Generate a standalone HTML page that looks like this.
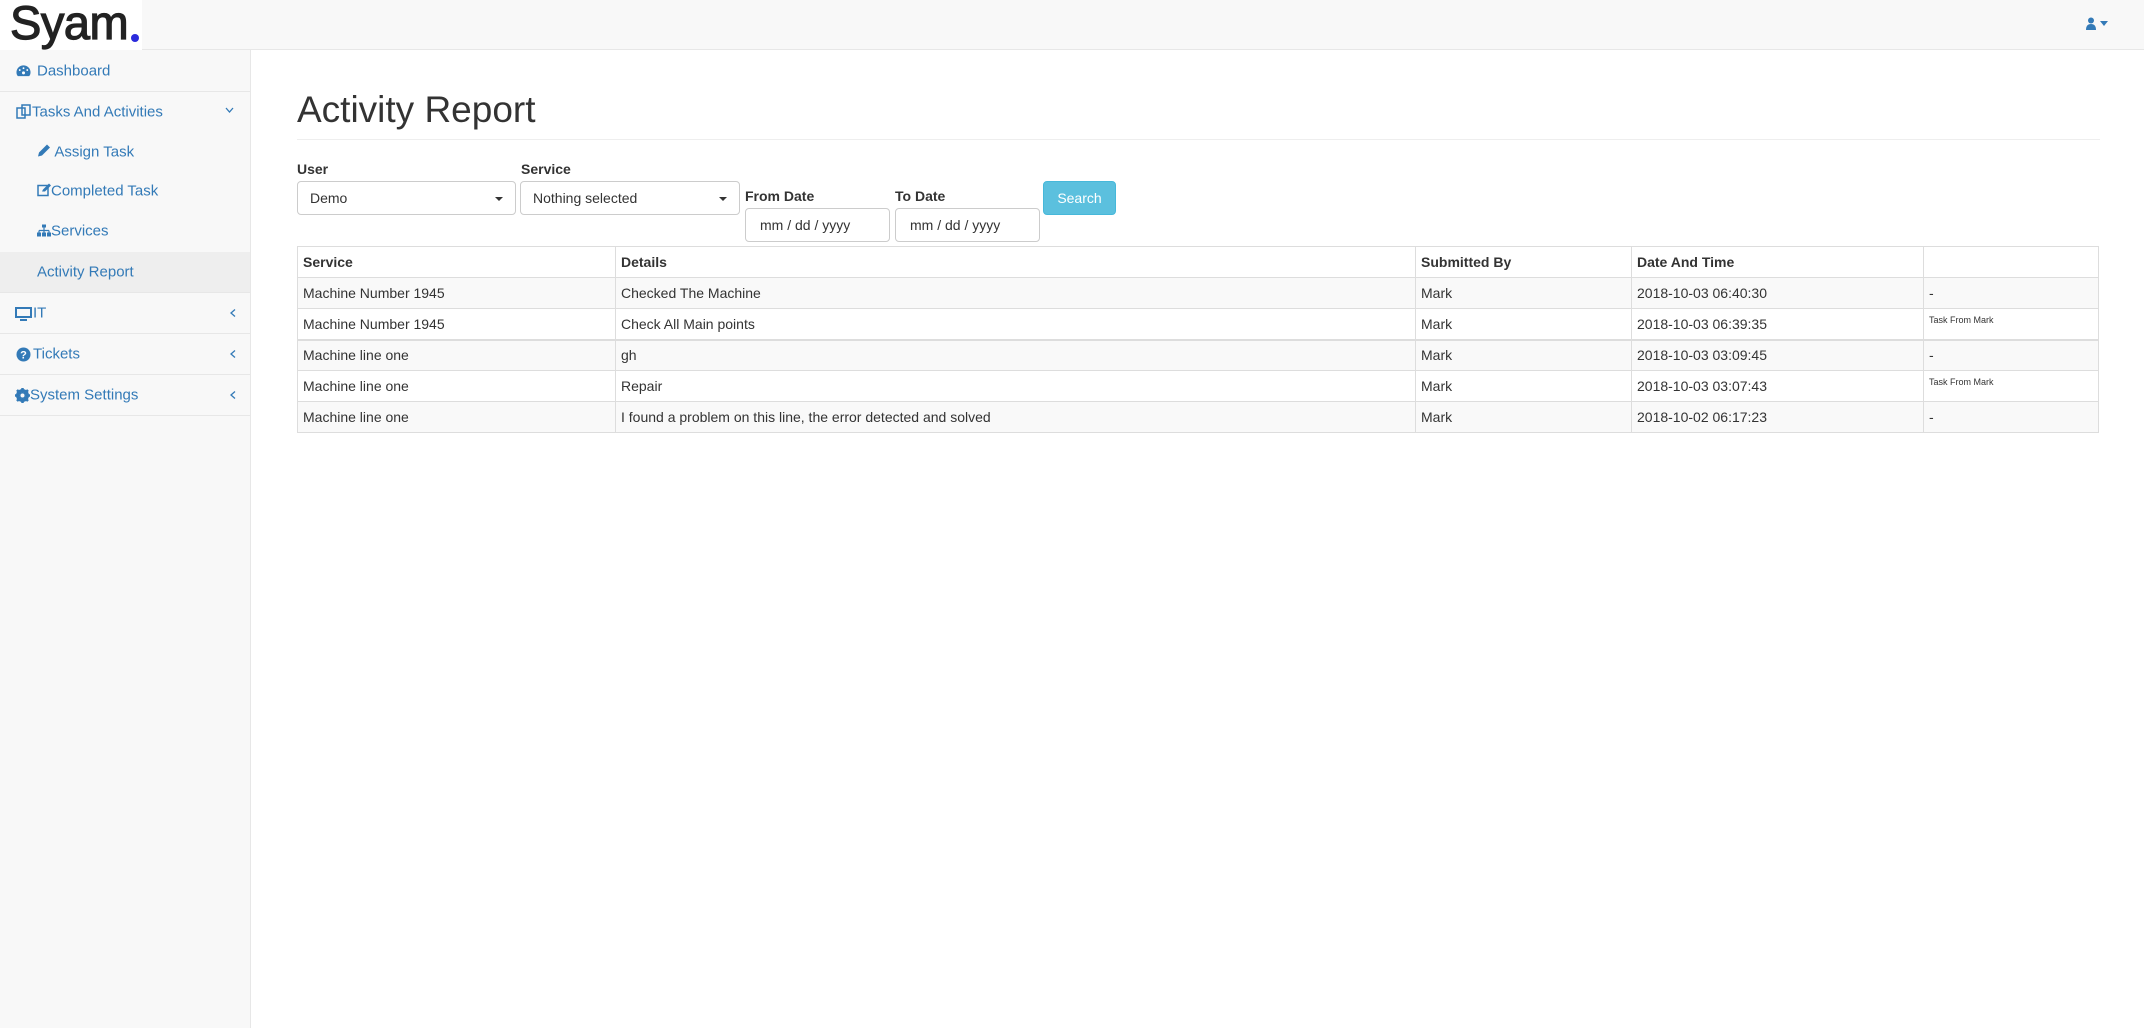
<!DOCTYPE html>
<html><head><meta charset="utf-8">
<style>
*{box-sizing:border-box;margin:0;padding:0}
body{width:2144px;height:1028px;background:#fff;font-family:"Liberation Sans",Arial,sans-serif;color:#333;position:relative;overflow:hidden}
.nav{position:absolute;left:0;top:0;width:2144px;height:50px;background:#f8f8f8;border-bottom:1px solid #e7e7e7}
.logo{position:absolute;left:0;top:0;width:142px;height:50px;background:#fff;font-size:47px;color:#222;line-height:46px;padding-left:10px;letter-spacing:-0.5px;-webkit-text-stroke:1.2px #222}
.dot{position:absolute;left:131px;top:34px;width:8px;height:8px;border-radius:50%;background:#2b2bdc}
.side{position:absolute;left:0;top:50px;width:251px;height:978px;background:#f8f8f8;border-right:1px solid #e7e7e7}
.it{position:absolute;left:0;width:250px;font-size:15px;color:#337ab7;border-bottom:1px solid #e7e7e7}
.it .t{position:absolute;top:50%;transform:translateY(-50%);white-space:nowrap}
.ch{position:absolute;right:14px;top:50%;transform:translateY(-50%)}
h1{position:absolute;left:297px;top:89px;font-size:37px;font-weight:400;color:#333;white-space:nowrap}
.hr{position:absolute;left:297px;top:139px;width:1803px;border-top:1px solid #eee}
.lbl{position:absolute;font-size:14px;font-weight:bold;color:#333}
.sel{position:absolute;height:34px;border:1px solid #ccc;border-radius:4px;background:#fff;font-size:14px;line-height:32px;padding-left:12px;color:#333}
.sel:after{content:"";position:absolute;right:12px;top:15px;border-left:4px solid transparent;border-right:4px solid transparent;border-top:4px solid #333}
.inp{position:absolute;height:34px;border:1px solid #ccc;border-radius:4px;background:#fff;font-size:14px;line-height:32px;padding-left:14px;color:#333}
.btn{position:absolute;left:1043px;top:181px;width:73px;height:34px;background:#5bc0de;border:1px solid #46b8da;border-radius:4px;color:#fff;font-size:14px;line-height:32px;text-align:center}
table{position:absolute;left:297px;top:246px;width:1802px;border-collapse:collapse;font-size:14px}
td,th{border:1px solid #ddd;height:31px;padding:0 5px;text-align:left;vertical-align:middle;white-space:nowrap}
th{font-weight:bold;height:31px}
tr.s td{background:#f9f9f9}
tr.b td{border-top:2px solid #ddd}
.sm{font-size:9px;vertical-align:top;padding-top:6px}
</style></head><body>
<div class="nav">
  <div class="logo">Syam</div><div class="dot"></div>
  <svg style="position:absolute;left:2086px;top:17px" width="26" height="14" viewBox="0 0 26 14"><circle cx="5" cy="3.5" r="3" fill="#337ab7"/><path d="M0 13 Q0 7 5 7 Q10 7 10 13Z" fill="#337ab7"/><path d="M14 4 L22 4 L18 9Z" fill="#337ab7"/></svg>
</div>
<div class="side">
  <div class="it" style="top:0;height:42px"><svg style="position:absolute;left:16px;top:14px" width="15" height="13" viewBox="0 0 16 13"><path d="M8 1A7.5 7.5 0 0 0 0.5 8.5 Q0.5 11 2 12.5 L14 12.5 Q15.5 11 15.5 8.5 A7.5 7.5 0 0 0 8 1Z" fill="#337ab7"/><circle cx="8" cy="9" r="1.6" fill="#fff"/><circle cx="4" cy="6" r="1" fill="#fff"/><circle cx="12" cy="6" r="1" fill="#fff"/><circle cx="8" cy="4" r="1" fill="#fff"/></svg><span class="t" style="left:37px">Dashboard</span></div>
  <div class="it" style="top:42px;height:160px;border-bottom:none"><svg style="position:absolute;left:16px;top:12px" width="15" height="15" viewBox="0 0 15 15"><rect x="1" y="4" width="8" height="10" fill="none" stroke="#337ab7" stroke-width="1.5"/><rect x="6" y="1" width="8" height="10" fill="none" stroke="#337ab7" stroke-width="1.5"/></svg><span class="t" style="left:32px;top:20px">Tasks And Activities</span><svg style="position:absolute;right:16px;top:15px" width="9" height="6" viewBox="0 0 9 6"><path d="M1 1L4.5 5L8 1" stroke="#337ab7" stroke-width="1.3" fill="none"/></svg>
    <span class="t" style="left:37px;top:60px"><svg width="14" height="14" viewBox="0 0 14 14" style="vertical-align:-1px"><path d="M1 13 L2 9 L10 1 L13 4 L5 12Z" fill="#337ab7"/></svg> Assign Task</span>
    <span class="t" style="left:37px;top:99px"><svg width="14" height="13" viewBox="0 0 14 13" style="vertical-align:-1px"><rect x="1" y="2" width="10" height="10" fill="none" stroke="#337ab7" stroke-width="1.5"/><path d="M5 8 L6 6 L12 0 L14 2 L8 8Z" fill="#337ab7"/></svg>Completed Task</span>
    <span class="t" style="left:37px;top:139px"><svg width="14" height="12" viewBox="0 0 14 12" style="vertical-align:-1px"><rect x="5" y="0" width="4" height="3" fill="#337ab7"/><path d="M7 3V6M2 6H12M2 6V8M7 6V8M12 6V8" stroke="#337ab7" stroke-width="1.2" fill="none"/><rect x="0" y="8" width="4" height="4" fill="#337ab7"/><rect x="5" y="8" width="4" height="4" fill="#337ab7"/><rect x="10" y="8" width="4" height="4" fill="#337ab7"/></svg>Services</span>
  </div>
  <div class="it" style="top:202px;height:41px;background:#eee"><span class="t" style="left:37px">Activity Report</span></div>
  <div class="it" style="top:243px;height:41px"><svg style="position:absolute;left:15px;top:14px" width="17" height="14" viewBox="0 0 17 14"><rect x="1" y="1" width="15" height="9" fill="none" stroke="#337ab7" stroke-width="2"/><rect x="5" y="12" width="7" height="2" fill="#337ab7"/></svg><span class="t" style="left:33px">IT</span><svg class="ch" width="6" height="9" viewBox="0 0 6 9"><path d="M5 1L1 4.5L5 8" stroke="#337ab7" stroke-width="1.3" fill="none"/></svg></div>
  <div class="it" style="top:284px;height:41px"><svg style="position:absolute;left:16px;top:13px" width="15" height="15" viewBox="0 0 15 15"><circle cx="7.5" cy="7.5" r="7" fill="#337ab7"/><text x="7.5" y="11.5" font-size="11" font-weight="bold" fill="#fff" text-anchor="middle" font-family="Liberation Sans">?</text></svg><span class="t" style="left:33px">Tickets</span><svg class="ch" width="6" height="9" viewBox="0 0 6 9"><path d="M5 1L1 4.5L5 8" stroke="#337ab7" stroke-width="1.3" fill="none"/></svg></div>
  <div class="it" style="top:325px;height:41px"><svg style="position:absolute;left:15px;top:13px" width="15" height="15" viewBox="0 0 15 15"><circle cx="7.5" cy="7.5" r="5" fill="none" stroke="#337ab7" stroke-width="3"/><path d="M7.5 0V15M0 7.5H15M2 2L13 13M13 2L2 13" stroke="#337ab7" stroke-width="2.5"/><circle cx="7.5" cy="7.5" r="2" fill="#f8f8f8"/></svg><span class="t" style="left:30px">System Settings</span><svg class="ch" width="6" height="9" viewBox="0 0 6 9"><path d="M5 1L1 4.5L5 8" stroke="#337ab7" stroke-width="1.3" fill="none"/></svg></div>
</div>

<h1>Activity Report</h1>
<div class="hr"></div>
<div class="lbl" style="left:297px;top:161px">User</div>
<div class="lbl" style="left:521px;top:161px">Service</div>
<div class="sel" style="left:297px;top:181px;width:219px">Demo</div>
<div class="sel" style="left:520px;top:181px;width:220px">Nothing selected</div>
<div class="lbl" style="left:745px;top:188px">From Date</div>
<div class="lbl" style="left:895px;top:188px">To Date</div>
<div class="inp" style="left:745px;top:208px;width:145px">mm / dd / yyyy</div>
<div class="inp" style="left:895px;top:208px;width:145px">mm / dd / yyyy</div>
<div class="btn">Search</div>

<table>
<tr><th style="width:318px">Service</th><th style="width:800px">Details</th><th style="width:216px">Submitted By</th><th style="width:292px">Date And Time</th><th></th></tr>
<tr class="s"><td>Machine Number 1945</td><td>Checked The Machine</td><td>Mark</td><td>2018-10-03 06:40:30</td><td>-</td></tr>
<tr><td>Machine Number 1945</td><td>Check All Main points</td><td>Mark</td><td>2018-10-03 06:39:35</td><td class="sm">Task From Mark</td></tr>
<tr class="s b"><td>Machine line one</td><td>gh</td><td>Mark</td><td>2018-10-03 03:09:45</td><td>-</td></tr>
<tr><td>Machine line one</td><td>Repair</td><td>Mark</td><td>2018-10-03 03:07:43</td><td class="sm">Task From Mark</td></tr>
<tr class="s"><td>Machine line one</td><td>I found a problem on this line, the error detected and solved</td><td>Mark</td><td>2018-10-02 06:17:23</td><td>-</td></tr>
</table>
</body></html>
